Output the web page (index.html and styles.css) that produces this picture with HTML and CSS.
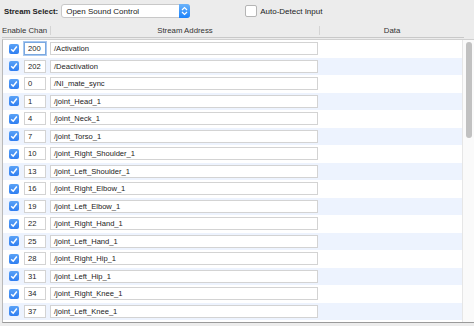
FILE: index.html
```html
<!DOCTYPE html>
<html lang="en">
<head>
    <meta charset="UTF-8">
    <title>Stream Select</title>
    <link rel="stylesheet" href="styles.css">
</head>
<body>
    <div class="window">
        <div class="toolbar">
            <span class="label">Stream Select:</span>
            <div class="popup">
                <span>Open Sound Control</span>
                <span class="stepper">
                    <svg width="7" height="10" viewBox="0 0 7 10"><path d="M1 4 L3.5 1.5 L6 4 M1 6 L3.5 8.5 L6 6" fill="none" stroke="#fff" stroke-width="1.2"/></svg>
                </span>
            </div>
            <label class="auto"><span class="box"></span>Auto-Detect Input</label>
        </div>
        <div class="table">
            <div class="header">
                <div class="h-enable">Enable Chan</div>
                <div class="h-address">Stream Address</div>
                <div class="h-data">Data</div>
            </div>
            <div class="body">
                <div class="rows" id="rows"></div>
                <div class="scrollbar"><div class="thumb"></div></div>
            </div>
        </div>
    </div>

    <script>
        const streams = [
            ['200', '/Activation'],
            ['202', '/Deactivation'],
            ['0', '/NI_mate_sync'],
            ['1', '/joint_Head_1'],
            ['4', '/joint_Neck_1'],
            ['7', '/joint_Torso_1'],
            ['10', '/joint_Right_Shoulder_1'],
            ['13', '/joint_Left_Shoulder_1'],
            ['16', '/joint_Right_Elbow_1'],
            ['19', '/joint_Left_Elbow_1'],
            ['22', '/joint_Right_Hand_1'],
            ['25', '/joint_Left_Hand_1'],
            ['28', '/joint_Right_Hip_1'],
            ['31', '/joint_Left_Hip_1'],
            ['34', '/joint_Right_Knee_1'],
            ['37', '/joint_Left_Knee_1']
        ];

        const rowsElement = document.getElementById('rows');
        streams.forEach((s, i) => {
            const row = document.createElement('div');
            row.className = 'row' + (i % 2 ? ' alt' : '');
            row.innerHTML =
                '<span class="check"><svg width="8" height="8" viewBox="0 0 8 8"><path d="M1.2 4.2 L3.2 6.2 L6.8 1.5" fill="none" stroke="#fff" stroke-width="1.5"/></svg></span>' +
                '<span class="chan' + (i === 0 ? ' focus' : '') + '">' + s[0] + '</span>' +
                '<span class="address">' + s[1] + '</span>' +
                '<span class="data"></span>';
            rowsElement.appendChild(row);
        });
    </script>
</body>
</html>
```

FILE: styles.css
```css
body {
    margin: 0;
    background-color: #ececec;
    font-family: 'Liberation Sans', Arial, sans-serif;
    font-size: 7.6px;
    color: #222;
    overflow: hidden;
}

.window {
    width: 474px;
    height: 326px;
    display: flex;
    flex-direction: column;
}

.toolbar {
    height: 22px;
    display: flex;
    align-items: center;
    padding: 0 4px;
    font-size: 8px;
}

.label {
    font-weight: bold;
    font-size: 7.8px;
    margin-right: 3px;
}

.popup {
    width: 129px;
    height: 14px;
    background: #fff;
    border: 1px solid #c8c8c8;
    border-radius: 3px;
    display: flex;
    align-items: center;
    padding-left: 4px;
    box-sizing: border-box;
    position: relative;
}

.popup .stepper {
    position: absolute;
    right: -1px;
    top: -1px;
    width: 11px;
    height: 14px;
    background: linear-gradient(#6cb3fa, #1a82fb);
    border-radius: 0 3px 3px 0;
    display: flex;
    align-items: center;
    justify-content: center;
}

.auto {
    display: flex;
    align-items: center;
    margin-left: 55px;
}

.auto .box {
    width: 10px;
    height: 10px;
    background: #fff;
    border: 1px solid #b5b5b5;
    border-radius: 2px;
    margin-right: 3px;
}

.table {
    flex: 1;
    display: flex;
    flex-direction: column;
    padding-left: 2px;
}

.header {
    height: 14px;
    display: flex;
    align-items: center;
    color: #333;
    border-bottom: 1px solid #c9c9c9;
    margin-right: 10px;
    padding-top: 1px;
    white-space: nowrap;
    font-size: 7.8px;
}

.h-enable {
    width: 46px;
    padding-right: 2px;
    border-right: 1px solid #d4d4d4;
}

.h-address {
    width: 268px;
    text-align: center;
    border-right: 1px solid #d4d4d4;
}

.h-data {
    flex: 1;
    text-align: center;
}

.body {
    flex: 1;
    display: flex;
    border-top: 1px solid #d0d0d0;
    border-left: 1px solid #b9b9b9;
    border-bottom: 1px solid #9a9a9a;
    margin-top: 1px;
    margin-bottom: 3px;
    overflow: hidden;
}

.rows {
    flex: 1;
    background: #fff;
}

.row {
    height: 17.5px;
    display: flex;
    align-items: center;
}

.row.alt {
    background: #edf3fe;
}

.check {
    width: 10px;
    height: 10px;
    margin-left: 6px;
    border-radius: 2px;
    background: linear-gradient(#5aa2f7, #2f7ef1);
    display: flex;
    align-items: center;
    justify-content: center;
}

.chan, .address {
    height: 13px;
    background: #fff;
    border: 1px solid #d3d3d3;
    box-sizing: border-box;
    display: flex;
    align-items: center;
    padding-left: 3px;
}

.chan {
    width: 22px;
    margin-left: 5px;
}

.chan.focus {
    border-color: #7aa8e0;
    box-shadow: 0 0 0 1px #a8c8f0;
}

.address {
    width: 268px;
    margin-left: 4px;
}

.data {
    flex: 1;
}

.scrollbar {
    width: 11px;
    background: #fafafa;
    border-left: 1px solid #e6e6e6;
    padding-top: 2px;
    display: flex;
    justify-content: center;
}

.thumb {
    width: 6px;
    height: 96px;
    background: #c1c1c1;
    border-radius: 3px;
}
```
